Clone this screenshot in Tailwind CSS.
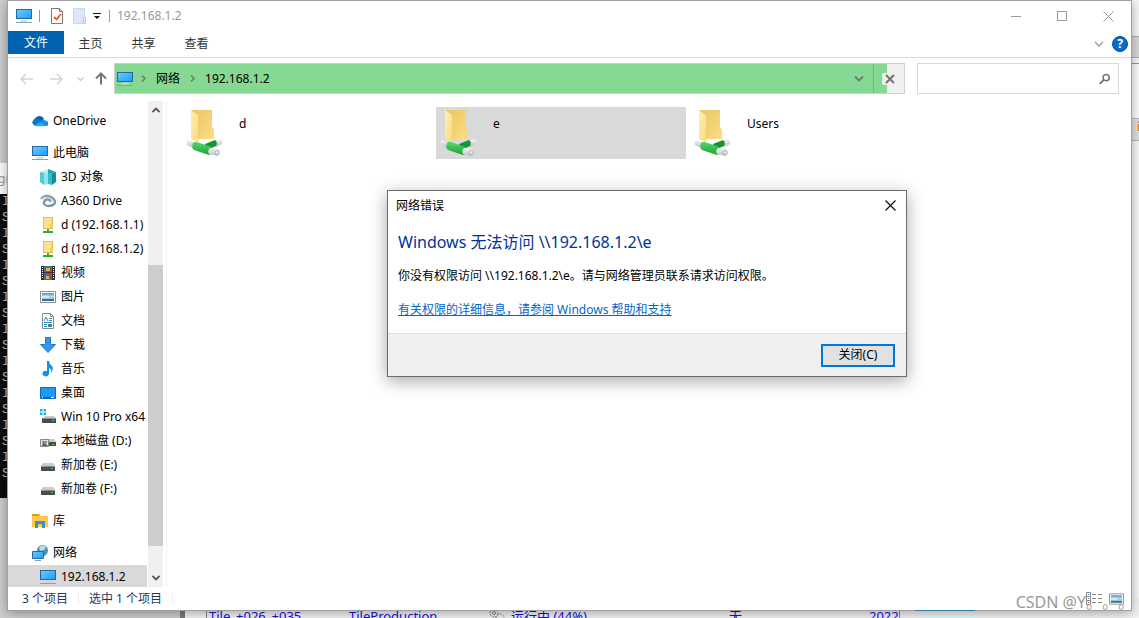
<!DOCTYPE html>
<html lang="zh-CN">
<head>
<meta charset="utf-8">
<title>192.168.1.2</title>
<script src="https://cdn.jsdelivr.net/npm/@tailwindcss/browser@4"></script>
</head>
<body class="h-screen overflow-hidden bg-[#cfcfcf] font-['Noto_Sans','Noto_Sans_CJK_SC',sans-serif] text-xs text-black">

<svg class="absolute size-0" aria-hidden="true">
  <defs>
    <linearGradient id="screen" x1="0" y1="0" x2="1" y2="1"><stop offset="0" stop-color="#6cc7ff"/><stop offset="1" stop-color="#1e9fff"/></linearGradient>
    <linearGradient id="fold" x1="0" y1="0" x2="1" y2="1"><stop offset="0" stop-color="#e9c560"/><stop offset="1" stop-color="#fddc85"/></linearGradient>
    <linearGradient id="flap" x1="0" y1="0" x2="1" y2="1"><stop offset="0" stop-color="#ffeeb5"/><stop offset="1" stop-color="#fcd97c"/></linearGradient>
    <linearGradient id="pipe" x1="0" y1="0" x2="0" y2="1"><stop offset="0" stop-color="#56dc6e"/><stop offset="1" stop-color="#1d9e36"/></linearGradient>
    <linearGradient id="metal" x1="0" y1="0" x2="0" y2="1"><stop offset="0" stop-color="#f7f7f7"/><stop offset="1" stop-color="#bdbdbd"/></linearGradient>
    <linearGradient id="sky" x1="0" y1="0" x2="0" y2="1"><stop offset="0" stop-color="#4d92d8"/><stop offset="0.55" stop-color="#d5ecf7"/><stop offset="0.6" stop-color="#3c8a78"/><stop offset="1" stop-color="#2b62a0"/></linearGradient>
    <symbol id="pc" viewBox="0 0 16 16">
      <path d="M0 1h16v10H0z" fill="#28699b"/><path d="M1 2h14v8H1z" fill="url(#screen)"/>
      <path d="M5 12h6v1H5zM4 13h8v0.5H4z" fill="#c5d5e0"/><path d="M0 14h16v1H0z" fill="#8aa0b2"/>
    </symbol>
    <symbol id="share" viewBox="0 0 16 16">
      <path d="M3 0h10v12H3z" fill="#e7bf52"/><path d="M4 1h7.500v10H4z" fill="#ffe28c"/><path d="M10 7h3v4h-3z" fill="#f7cf68"/>
      <path d="M7 12h2v2h4v2H3v-2h4z" fill="#2fae3b"/>
    </symbol>
    <symbol id="disk" viewBox="0 0 16 16">
      <path d="M3 6h10l2 3H1z" fill="#c9c9c9"/><path d="M1 9h14v5H1z" fill="#4a4d50"/><path d="M1 9h14v1H1z" fill="#8e9194"/><path d="M11 11h2v1h-2z" fill="#39e03c"/>
    </symbol>
    <symbol id="netfolder" viewBox="0 0 38 48">
      <path d="M5 1h21v18l2 1v10H8z" fill="url(#fold)"/>
      <path d="M5 1l8 6v21l-1 5-7-3z" fill="url(#flap)"/>
      <path d="M12 7l1 0v21l-1 4z" fill="#e8c263" opacity=".6"/>
      <path d="M1 32q1-1 2-1l6 3-2 5-6-3q-1-2 0-4z" fill="url(#metal)"/>
      <path d="M29 32l5-2q3 1 2 5l-6 3z" fill="url(#metal)"/>
      <path d="M19 35l10-4q3 2 1 6l-9 4z" fill="#159532"/>
      <path d="M7 34q2-2 4-1l14 5q3 2 0 7l-2 1-15-5q-3-2-1-7z" fill="url(#pipe)"/>
      <path d="M24 39l8 1q3 2 1 6l-2 1-8-2q-2-3 1-6z" fill="url(#metal)"/>
      <circle cx="31" cy="43.500" r="2" fill="#e9e9e9" stroke="#a7a7a7" stroke-width=".8"/>
    </symbol>
    <symbol id="photo" viewBox="0 0 16 16">
      <path d="M.5 2.500h15v11H.5z" fill="#fff" stroke="#8d8d8d"/><path d="M2 4h12v8H2z" fill="url(#sky)"/><path d="M2 8l4-2 4 3 4 0v1H2z" fill="#fff" opacity=".55"/>
    </symbol>
  </defs>
</svg>

<main class="relative h-screen overflow-hidden">

  <!-- windows lying behind the explorer -->
  <section aria-hidden="true" class="absolute top-[163px] left-0 h-[335px] w-4 overflow-hidden bg-[#0c0c0c]">
    <div class="-ml-0.5 h-[31px] bg-white pt-2 text-xs leading-4 text-[#999]">gi</div>
    <div class="flex flex-col pl-[2px] font-['Liberation_Mono',monospace] text-[13px] leading-4 text-[#bbb]">
      <span>I</span><span>S</span><span>I</span><span>S</span><span>I</span><span>S</span><span>I</span><span>S</span><span>I</span><span>S</span><span>I</span><span>S</span><span>I</span><span>S</span><span>I</span><span>S</span><span>I</span><span>S</span>
    </div>
  </section>
  <section aria-hidden="true" class="absolute right-0 bottom-0 left-[180px] h-5 border-l-[5px] border-[#7d7d7d] bg-[#f5f5f5] text-[#1a0fe0]">
    <div class="ml-[21px] flex h-5 border-l border-[#888] pl-0.5 text-[13px] leading-9 whitespace-nowrap">
      <span class="w-[140px]">Tile_+026_+035</span>
      <span class="w-[140px]">TileProduction</span>
      <svg class="mt-2.5 mr-1.5 size-4" viewBox="0 0 16 16" fill="none" stroke="#888"><circle cx="5" cy="5" r="4" stroke-dasharray="2 1"/><circle cx="5" cy="5" r="1.500"/><circle cx="11" cy="10" r="4" stroke-dasharray="2 1"/></svg>
      <span class="w-[218px]">运行中 (44%)</span>
      <span class="w-[140px]">无</span>
      <span class="border-r border-[#888]">2022</span>
    </div>
  </section>
  <section aria-hidden="true" class="absolute top-0 right-0 h-[598px] w-4 bg-[#fafafa]">
    <div class="mt-9 h-[22px] border-y border-[#b0b0b0] bg-[#dcdcdc]"></div>
    <div class="mt-[5px] h-[55px] border-t border-[#999] bg-white"></div>
    <div class="h-[23px] border-y border-[#bbb] bg-[#e3e3e3] pl-3.5 font-bold text-[#e88a1a]">i</div>
  </section>
  <div aria-hidden="true" class="absolute bottom-[7px] left-[915px] z-10 h-px w-[60px] bg-[#2f7fae]"></div>

  <!-- explorer window -->
  <section class="absolute top-0 right-[7px] bottom-[7px] left-[7px] flex flex-col border border-[#a0a0a0] bg-white shadow-[0_2px_12px_rgba(0,0,0,0.35)]">

    <header class="flex h-[30px] shrink-0 items-center pl-2 text-[#999]">
      <svg class="size-4"><use href="#pc"/></svg>
      <span class="ml-[7px] h-3 w-px bg-[#999]"></span>
      <button aria-label="属性" class="ml-2.5"><svg class="h-4 w-[14px]" viewBox="0 0 14 16"><path d="M1.500.5h8l3 3v12h-11z" fill="#fff" stroke="#777"/><path d="M9.500.5v3h3" fill="none" stroke="#777"/><path d="M4 9l2.500 2.500L11 6" fill="none" stroke="#e8581c" stroke-width="1.800"/></svg></button>
      <button aria-label="新建文件夹" class="ml-2"><svg class="h-4 w-[14px]" viewBox="0 0 14 16"><path d="M1.500.5h11v15h-11z" fill="#dde6f5" stroke="#ccd8ec"/><path d="M11.500 9.500h2v6h-2z" fill="#eef3fb" stroke="#b9c8e0"/></svg></button>
      <button aria-label="自定义快速访问工具栏" class="ml-[7px]"><svg class="h-2 w-2" viewBox="0 0 8 8"><path d="M0 1h8v1H0zM1 4h6L4 7z" fill="#111"/></svg></button>
      <span class="ml-2 h-3 w-px bg-[#999]"></span>
      <h1 class="ml-[7px]">192.168.1.2</h1>
      <div class="ml-auto flex items-center">
        <button aria-label="最小化" class="grid h-[29px] w-[45px] place-items-center"><svg class="size-[11px]" viewBox="0 0 11 11"><path d="M0 5.500h10" stroke="#999"/></svg></button>
        <button aria-label="最大化" class="grid h-[29px] w-[46px] place-items-center"><svg class="size-[11px]" viewBox="0 0 11 11"><path d="M.5.5h9v9h-9z" fill="none" stroke="#999"/></svg></button>
        <button aria-label="关闭" class="grid h-[29px] w-[46px] place-items-center"><svg class="size-[11px]" viewBox="0 0 11 11"><path d="M.5.5l10 10M10.500.5l-10 10" stroke="#999"/></svg></button>
      </div>
    </header>

    <nav aria-label="功能区" class="flex h-[27px] shrink-0 items-start border-b border-[#dadbdc] leading-[26px] text-[#333]">
      <button class="h-[23px] w-14 bg-[#0063b1] leading-[24px] text-white">文件</button>
      <button class="w-[53px]">主页</button>
      <button class="w-[53px]">共享</button>
      <button class="w-[53px]">查看</button>
      <div class="ml-auto flex h-[25px] items-center gap-2 pr-[3px]">
        <button aria-label="展开功能区"><svg class="size-[10px]" viewBox="0 0 10 10"><path d="M1 3l4 4 4-4" fill="none" stroke="#999" stroke-width="1.300"/></svg></button>
        <button aria-label="帮助" class="size-4 rounded-full border border-[#084f93] bg-[#0a6bc8] text-center text-xs leading-[14px] font-bold text-white">?</button>
      </div>
    </nav>

    <div class="flex h-[43px] shrink-0 items-start pt-[5px]">
      <div class="flex h-[31px] w-[106px] items-center pl-3">
        <button aria-label="后退"><svg class="h-3 w-[13px]" viewBox="0 0 13 12"><path d="M13 6H1.500M6 1L1 6l5 5" fill="none" stroke="#d4d4d4" stroke-width="1.500"/></svg></button>
        <button aria-label="前进" class="ml-[17px]"><svg class="h-3 w-[13px]" viewBox="0 0 13 12"><path d="M0 6h11.500M7 1l5 5-5 5" fill="none" stroke="#d4d4d4" stroke-width="1.500"/></svg></button>
        <button aria-label="最近位置" class="ml-3.5"><svg class="h-1.5 w-[7px]" viewBox="0 0 7 6"><path d="M.5 1.500l3 3 3-3" fill="none" stroke="#ccc" stroke-width="1.400"/></svg></button>
        <button aria-label="上移" class="ml-[11px]"><svg class="h-[13px] w-3" viewBox="0 0 12 13"><path d="M6 12.500V2M1 6.500l5-5 5 5" fill="none" stroke="#757575" stroke-width="2"/></svg></button>
      </div>
      <div class="flex h-[31px] grow items-center border border-[#d0d0d0] bg-[#f0f0f0]">
        <div class="flex h-full grow items-center bg-[#86d993] pl-0.5">
          <svg class="size-4"><use href="#pc"/></svg>
          <svg class="ml-2 h-[7px] w-[5px]" viewBox="0 0 5 7"><path d="M1 .5l3 3-3 3" fill="none" stroke="#6f7f72" stroke-width="1.700"/></svg>
          <button class="ml-2.5">网络</button>
          <svg class="ml-2.5 h-[7px] w-[5px]" viewBox="0 0 5 7"><path d="M1 .5l3 3-3 3" fill="none" stroke="#6f7f72" stroke-width="1.700"/></svg>
          <button class="ml-2.5">192.168.1.2</button>
          <button aria-label="以前的位置" class="mr-[9px] ml-auto"><svg class="h-1.5 w-[10px]" viewBox="0 0 10 6"><path d="M1 .5l4 4 4-4" fill="none" stroke="#6f7f72" stroke-width="2"/></svg></button>
        </div>
        <button aria-label="停止加载" class="grid h-full w-[31px] place-items-center border-l border-[#72b77d] bg-linear-to-r from-[#86d993] from-[13px] to-[#f0f0f0] to-[13px]"><svg class="h-[14px] w-[16px]" viewBox="0 0 16 14"><path d="M6 1H3Q0 1 1.500 7 0 13 3 13h3z" fill="#f0f0f0"/><path d="M5 3l8 8M13 3l-8 8" stroke="#737373" stroke-width="2"/></svg></button>
      </div>
      <label class="mr-3 ml-3 flex h-[31px] w-[202px] items-center border border-[#d9d9d9] pr-2">
        <input type="text" aria-label="搜索" class="h-full min-w-0 grow px-2 outline-none">
        <svg class="size-3" viewBox="0 0 12 12" fill="none" stroke="#737373"><circle cx="7.500" cy="4.500" r="3.300" stroke-width="1.600"/><path d="M5 7L.8 11.200" stroke-width="2"/></svg>
      </label>
    </div>

    <div class="flex min-h-0 grow">
      <aside class="flex w-[159px] shrink-0 border-r border-[#f3f3f3]">
        <ul class="h-full min-w-0 grow overflow-hidden pt-2 leading-6 whitespace-nowrap [&_a]:flex [&_a]:h-6 [&_a]:items-center [&_a]:gap-[5px] [&_svg]:size-4 [&_svg]:shrink-0">
          <li class="mb-2"><a href="#" class="pl-6"><svg viewBox="0 0 16 16"><path d="M4 13a4 4 0 0 1-1-7.500A5 5 0 0 1 12 6l-3 5z" fill="#0364b8"/><path d="M10 6.500a4 4 0 0 1 3 1A3 3 0 0 1 15 13H6z" fill="#1490df"/><path d="M3.500 6.500L14 12.500q-.5.800-2 .8H4A3.500 3.500 0 0 1 3.500 6.500z" fill="#28a8ea"/><path d="M3.500 6.200q2-1 4 .5L10 8 3 12Q0 11 .3 9t3.200-2.800z" fill="#0a78d0"/></svg>OneDrive</a></li>
          <li><a href="#" class="pl-6"><svg><use href="#pc"/></svg>此电脑</a></li>
          <li><a href="#" class="pl-8"><svg viewBox="0 0 16 16"><path d="M0 3l8-3 8 3-4 1H4z" fill="#b5f0f4"/><path d="M8 0l8 3-4 1-4 0z" fill="#1fa9bb"/><path d="M0 3l4 1v12l-4-3z" fill="#4fc9d5"/><path d="M4 4h4l0 11-4 1z" fill="#93e4eb"/><path d="M8 4h4v12l-4-1z" fill="#38bac8"/><path d="M12 4l4-1v10l-4 3z" fill="#128c9f"/></svg>3D 对象</a></li>
          <li><a href="#" class="pl-8"><svg viewBox="0 0 16 16" fill="none"><path d="M1 6q4-5 10-2 5 3 4 6-2 3-7 3-5-1-4-4 1-3 4-2.500 3 .5 2 2.500" stroke="#7f99a8" stroke-width="2.400"/><path d="M1 6q5-3 9-1 4 2 4 5" stroke="#bed0da" stroke-width="1.200"/></svg>A360 Drive</a></li>
          <li><a href="#" class="pl-8"><svg><use href="#share"/></svg>d (192.168.1.1)</a></li>
          <li><a href="#" class="pl-8"><svg><use href="#share"/></svg>d (192.168.1.2)</a></li>
          <li><a href="#" class="pl-8"><svg viewBox="0 0 16 16"><path d="M1 1h14v14H1z" fill="#333"/><path d="M4 1h8v6H4z" fill="#3d6fb8"/><path d="M4 8h8v7H4z" fill="#3a66c8"/><path d="M6 3h4v3H6zM6 11h3v3H6z" fill="#e6b422"/><path d="M10 5h2v2h-2zM8 9h3v2H8z" fill="#c23b2c"/><path d="M2.500 2v12M13.500 2v12" stroke="#ddd" stroke-dasharray="1 1"/></svg>视频</a></li>
          <li><a href="#" class="pl-8"><svg><use href="#photo"/></svg>图片</a></li>
          <li><a href="#" class="pl-8"><svg viewBox="0 0 16 16"><path d="M2.500.5h8l3 3v12h-11z" fill="#fff" stroke="#888"/><path d="M10.500.5v3h3" fill="none" stroke="#888"/><path d="M4 8l2-4 2 4M9 5.500h3M9 7.500h3M4 9.500h8" fill="none" stroke="#2d8bc5"/><path d="M4 11.500h3M4 13.500h3" stroke="#2d8bc5"/><path d="M8 11h4v3H8z" fill="#477f8c"/></svg>文档</a></li>
          <li><a href="#" class="pl-8"><svg viewBox="0 0 16 16"><path d="M5.500.5h5v7h5L8 15.500.5 7.500h5z" fill="#3595e8" stroke="#2279c9"/></svg>下载</a></li>
          <li><a href="#" class="pl-8"><svg viewBox="0 0 16 16"><path d="M7 0h2q0 3 3 5 2 3-1 7 1-4-2-5v6a3.300 2.700 0 1 1-2-2.800z" fill="#1192ea"/></svg>音乐</a></li>
          <li><a href="#" class="pl-8"><svg viewBox="0 0 16 16"><path d="M.5 2.500h15v11H.5z" fill="#1f9bf5" stroke="#0c6cb5"/><path d="M1 12h14v1H1z" fill="#0c5c9e"/><path d="M2 12h1v1H2zM11 12h3v1h-3z" fill="#fff"/></svg>桌面</a></li>
          <li><a href="#" class="pl-8"><svg viewBox="0 0 16 16"><path d="M0 0h2.500v2.500H0zM3.500 0H6v2.500H3.500zM0 3.500h2.500V6H0zM3.500 3.500H6V6H3.500z" fill="#19b4e8"/><path d="M5 7h9l2 2H3z" fill="#c9c9c9"/><path d="M2 9h14v5H2z" fill="#4a4d50"/><path d="M2 9h14v1H2z" fill="#8e9194"/><path d="M12 11h2v1h-2z" fill="#39e03c"/></svg>Win 10 Pro x64</a></li>
          <li><a href="#" class="pl-8"><svg viewBox="0 0 16 16"><path d="M6 6h8l2 3H4z" fill="#c9c9c9"/><path d="M4 9h12v4H4z" fill="#4a4d50"/><path d="M12 11h2v1h-2z" fill="#39e03c"/><path d="M.5 6.500h8v7h-8z" fill="#e6e6e6" stroke="#888"/><circle cx="3.500" cy="9" r="1.300" fill="#467f9b"/><circle cx="6" cy="9" r="1.200" fill="#ab7a53"/><path d="M2 13q0-3 2-3t4 3z" fill="#516b72"/></svg>本地磁盘 (D:)</a></li>
          <li><a href="#" class="pl-8"><svg><use href="#disk"/></svg>新加卷 (E:)</a></li>
          <li class="mb-2"><a href="#" class="pl-8"><svg><use href="#disk"/></svg>新加卷 (F:)</a></li>
          <li class="mb-2"><a href="#" class="pl-6"><svg viewBox="0 0 16 16"><path d="M0 1h7l1 2h8v11H0z" fill="#fcc94b"/><path d="M0 1h7l1 2H0z" fill="#dd9b12"/><path d="M3 8h10v7h-3v-4H6v4H3z" fill="#3791d6"/></svg>库</a></li>
          <li><a href="#" class="pl-6"><svg viewBox="0 0 16 16"><circle cx="10.500" cy="5.500" r="5.500" fill="#4e93b5"/><path d="M7 2q4-3 7 0l-2 3-4 1z" fill="#b6dce9"/><path d="M.5 6.500h11v7H.5z" fill="url(#screen)" stroke="#28699b"/><path d="M3 15h6v1H3z" fill="#8aa0b2"/></svg>网络</a></li>
          <li><a href="#" aria-current="page" class="bg-[#d9d9d9] pl-8"><svg><use href="#pc"/></svg>192.168.1.2</a></li>
        </ul>
        <div aria-hidden="true" class="mr-[3px] ml-px flex w-[15px] shrink-0 flex-col items-center bg-[#f0f0f0]">
          <svg class="mt-1.5 h-1.5 w-2" viewBox="0 0 8 6"><path d="M.5 5L4 1.500 7.500 5" fill="none" stroke="#555" stroke-width="1.800"/></svg>
          <div class="mt-auto mb-[29px] h-[281px] w-full bg-[#cdcdcd]"></div>
          <svg class="mb-1.5 h-1.5 w-2" viewBox="0 0 8 6"><path d="M.5 1L4 4.500 7.500 1" fill="none" stroke="#555" stroke-width="1.800"/></svg>
        </div>
      </aside>

      <ul class="flex grow items-start gap-1 pt-1.5 pl-[15px] leading-4 [&_button]:flex [&_button]:h-[52px] [&_button]:w-[250px] [&_button]:items-start [&_button]:pt-0.5 [&_button]:pl-1 [&_span]:mt-[7px] [&_svg]:mr-[15px] [&_svg]:h-12 [&_svg]:w-[38px]">
        <li><button><svg><use href="#netfolder"/></svg><span>d</span></button></li>
        <li><button aria-pressed="true" class="bg-[#d9d9d9]"><svg><use href="#netfolder"/></svg><span>e</span></button></li>
        <li><button><svg><use href="#netfolder"/></svg><span>Users</span></button></li>
      </ul>
    </div>

    <footer class="flex h-[23px] shrink-0 items-center pl-3.5 text-[#1e395b]">
      <span>3 个项目</span>
      <span class="mr-2.5 ml-2.5 h-3 w-px bg-[#eee]"></span>
      <span>选中 1 个项目</span>
      <span class="ml-2.5 h-3 w-px bg-[#eee]"></span>
      <div class="mr-[7px] ml-auto flex items-center gap-[7px]">
        <button aria-label="详细信息"><svg class="h-[14px] w-4" viewBox="0 0 16 14"><path d="M.5.5h4v12h-4zM.5 4.500h4M.5 8.500h4" fill="#fff" stroke="#888"/><path d="M6 2.500h4M12 2.500h4M6 6.500h4M12 6.500h4M6 10.500h4M12 10.500h4" stroke="#888"/><path d="M2 2h1v1H2zM2 6h1v1H2z" fill="#2a80c8"/><path d="M2 10h1v1H2z" fill="#d33"/></svg></button>
        <button aria-label="大缩略图"><svg class="h-4 w-[15px]"><use href="#photo"/></svg></button>
      </div>
    </footer>
  </section>

  <p class="pointer-events-none absolute right-[5px] bottom-1.5 text-base leading-5 text-[#999] [text-spacing-trim:space-all]">CSDN @Y。。。</p>

  <!-- error dialog -->
  <section role="dialog" aria-labelledby="dlg-title" class="absolute top-[190px] left-[387px] flex w-[520px] flex-col border border-[#6b6b6b] bg-white shadow-[0_4px_16px_rgba(0,0,0,0.35)]">
    <header class="flex h-[29px] items-center justify-between pr-2.5 pl-2">
      <h2 id="dlg-title">网络错误</h2>
      <button aria-label="关闭"><svg class="size-[11px]" viewBox="0 0 11 11"><path d="M.5.5l10 10M10.500.5l-10 10" stroke="#111" stroke-width="1.200"/></svg></button>
    </header>
    <div class="flex h-[113px] flex-col items-start pt-3 pl-2.5">
      <h3 class="text-base leading-5 text-[#003399]">Windows 无法访问 \\192.168.1.2\e</h3>
      <p class="mt-4 leading-4">你没有权限访问 \\192.168.1.2\e。请与网络管理员联系请求访问权限。</p>
      <a href="#" class="mt-[18px] leading-4 text-[#0066cc] underline">有关权限的详细信息，请参阅 Windows 帮助和支持</a>
    </div>
    <footer class="flex h-[43px] items-center justify-end border-t border-[#dfdfdf] bg-[#f0f0f0] pr-[11px]">
      <button class="h-[23px] w-[74px] border-2 border-[#0078d7] bg-[#e1e1e1] leading-[18px]">关闭(C)</button>
    </footer>
  </section>
</main>
</body>
</html>
